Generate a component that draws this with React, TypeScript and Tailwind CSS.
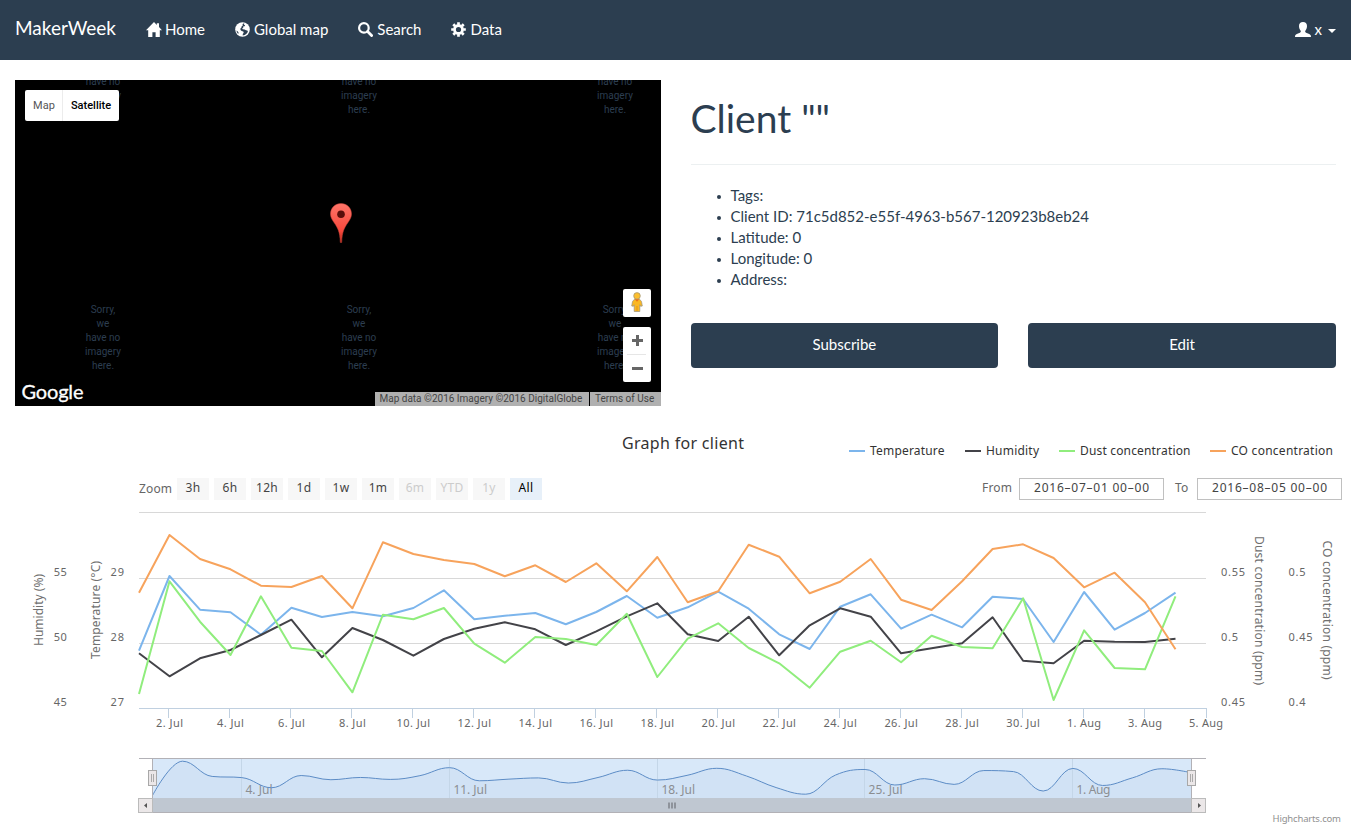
import React from "react";

const CHART_FONT = "font-['Noto_Sans','Open_Sans',sans-serif]";

const DAY = 30.486;
const LEFT = 139;

const temperature = [650.7, 576, 609.7, 612.3, 634.7, 607.7, 617, 612, 616.3, 608, 590.3, 619.3, 615.7, 613, 624.3, 612, 596, 617.7, 607.3, 591.7, 608.7, 634.3, 649, 606.7, 594.3, 628.7, 614.7, 627.3, 596.7, 599, 642, 592, 629.7, 613, 592.7];
const humidity = [653.3, 676.3, 658.3, 650, 635, 619.7, 657.3, 628, 640, 655.7, 639, 628.7, 622.3, 629.3, 645, 631.3, 616.3, 603.3, 634.3, 641, 616.7, 655.3, 625.3, 608.3, 616.7, 653.3, 648.3, 643.3, 617.3, 660.7, 663.3, 640.7, 641.7, 642, 638.7];
const dust = [694, 581.3, 621.7, 655, 596.3, 647.7, 651, 692.3, 614.7, 619.3, 608, 643.7, 662.7, 637, 639, 645, 613.7, 677, 638.7, 623.3, 648, 663.3, 687.7, 651.7, 640.7, 662.3, 635.7, 647, 648.3, 598.3, 700, 630.3, 668, 669.3, 596.3];
const co = [592.7, 535, 559, 569.3, 585.7, 587, 576, 608.3, 542.3, 554, 560, 564, 576.3, 565.3, 582, 563.3, 591.3, 557, 602.3, 591.3, 544.7, 556.7, 593.3, 581.7, 559, 599.7, 610, 581.3, 549, 544.3, 558, 587.3, 572.7, 602.3, 649.3];

const line = (ys: number[]) => ys.map((y, i) => `${(LEFT + i * DAY).toFixed(1)},${y}`).join(" ");

// Smoothed curve for the navigator; control points never overshoot their neighbours.
function spline(pts: number[][]): string {
  let d = `M${pts[0][0]} ${pts[0][1]}`;
  let prevRight = pts[0];
  for (let i = 1; i < pts.length; i++) {
    const [x, y] = pts[i];
    let left = [x, y];
    let right = [x, y];
    if (i < pts.length - 1) {
      const [lx, ly] = pts[i - 1];
      const [nx, ny] = pts[i + 1];
      const lcx = (1.5 * x + lx) / 2.5;
      let lcy = (1.5 * y + ly) / 2.5;
      const rcx = (1.5 * x + nx) / 2.5;
      let rcy = (1.5 * y + ny) / 2.5;
      const c = ((rcy - lcy) * (rcx - x)) / (rcx - lcx) + y - rcy;
      lcy += c;
      rcy += c;
      if (lcy > ly && lcy > y) {
        lcy = Math.max(ly, y);
        rcy = 2 * y - lcy;
      } else if (lcy < ly && lcy < y) {
        lcy = Math.min(ly, y);
        rcy = 2 * y - lcy;
      }
      if (rcy > ny && rcy > y) {
        rcy = Math.max(ny, y);
        lcy = 2 * y - rcy;
      } else if (rcy < ny && rcy < y) {
        rcy = Math.min(ny, y);
        lcy = 2 * y - rcy;
      }
      left = [lcx, lcy];
      right = [rcx, rcy];
    }
    d += ` C${prevRight[0].toFixed(2)} ${prevRight[1].toFixed(2)} ${left[0].toFixed(2)} ${left[1].toFixed(2)} ${x.toFixed(2)} ${y.toFixed(2)}`;
    prevRight = right;
  }
  return d;
}

const navPoints = temperature.map((t, i) => [152.8 + i * 29.68, 761.2 + (t - 576) * 0.452]);
navPoints.push([1191.5, 772.8]);
const navPath = spline(navPoints);

const HomeIcon = () => (
  <svg viewBox="0 0 16 15" className="h-[15px] w-4" fill="#fff">
    <path d="M8 0 0 8.2h2.2V15h4.2v-4.8h3.2V15h4.2V8.2H16L13 5.1V1.2h-2.2v1.7z" />
  </svg>
);
const GlobeIcon = () => (
  <svg viewBox="0 0 15 15" className="size-[15px]">
    <circle cx="7.5" cy="7.5" r="7.3" fill="#fff" />
    <path fill="#2c3e50" d="M8.300 1.400 9.300 1.500 9 2.700 10.100 3.300 9.700 4.300 8.400 4.300 8.300 5.600 7.200 6.500 7.800 7.300 9.600 7.400 11 8.200 12.400 8.600 12.900 9.800 11.700 11.600 9.800 13.100 7.700 13.600 7.800 12 8.700 10.700 8.300 9.600 6.600 9.100 5.500 7.900 5.400 6.600 6.300 5.700 6.700 4.200 8 3.200 7.400 2.400zM1.500 8.400 2.800 9.400 3.500 10.600 3.300 12 1.900 10.200z" />
  </svg>
);
const SearchIcon = () => (
  <svg viewBox="0 0 15 15" className="size-[15px]" fill="none" stroke="#fff">
    <circle cx="5.9" cy="5.9" r="4.8" strokeWidth="2.2" />
    <path d="m9.6 9.6 4 4" strokeWidth="2.8" strokeLinecap="round" />
  </svg>
);
const CogIcon = () => (
  <svg viewBox="0 0 15 15" className="size-[15px]" fill="none" stroke="#fff">
    <circle cx="7.5" cy="7.5" r="4" strokeWidth="2.8" />
    <g strokeWidth="2.7">
      <path d="M7.5.2v2.6M7.5 12.2v2.6M.2 7.5h2.6M12.2 7.5h2.6M2.3 2.3l1.9 1.9M10.8 10.8l1.9 1.9M12.7 2.3l-1.9 1.9M4.2 10.8l-1.9 1.9" />
    </g>
  </svg>
);
const UserIcon = () => (
  <svg viewBox="0 0 16 15" className="h-[15px] w-4" fill="#fff">
    <path d="M8 0c2.5 0 4 1.5 4 4 0 1.8-.6 3.3-1.5 4.4-.6.8-.4 1.8.6 2.3l3.1 1.4c1.1.5 1.8 1.3 1.8 2.900H0c0-1.6.7-2.4 1.8-2.9l3.1-1.4c1-.5 1.2-1.5.6-2.3C4.600 7.300 4 5.800 4 4c0-2.500 1.500-4 4-4z" />
  </svg>
);

const navItems = [
  { label: "Home", Icon: HomeIcon, gap: "gap-[3px]" },
  { label: "Global map", Icon: GlobeIcon, gap: "gap-[4px]" },
  { label: "Search", Icon: SearchIcon, gap: "gap-[4px]" },
  { label: "Data", Icon: CogIcon, gap: "gap-[4px]" },
];

function Navbar() {
  return (
    <header className="flex h-[60px] items-center justify-between bg-[#2c3e50] px-[15px] pb-[2px] text-[15px] text-white">
      <div className="flex items-center">
        <span className="mr-[30px] pb-[3px] text-[19px] leading-[21px]">MakerWeek</span>
        <nav className="flex gap-[30px]">
          {navItems.map(({ label, Icon, gap }) => (
            <a key={label} className={`flex items-center leading-[21px] ${gap}`}>
              <Icon />
              {label}
            </a>
          ))}
        </nav>
      </div>
      <a className="flex items-center gap-[3px] leading-[21px]">
        <UserIcon />
        <span className="pl-[1px]">x</span>
        <span className="ml-[3px] mt-[4px] border-x-4 border-t-4 border-x-transparent border-t-white" />
      </a>
    </header>
  );
}

const upperTiles = ["left-[60px] -top-[5px]", "left-[316px] -top-[5px]", "left-[572px] -top-[5px]"];
const lowerTiles = ["left-[60px] top-[223px]", "left-[316px] top-[223px]", "left-[572px] top-[223px]"];

function MapPanel() {
  return (
    <div className="relative h-[326px] overflow-hidden bg-black font-[Roboto,sans-serif]">
      {upperTiles.map((pos) => (
        <div key={pos} className={`absolute w-14 text-center text-[10px] leading-[14px] text-[#2c3e50] ${pos}`}>
          have no<br />imagery<br />here.
        </div>
      ))}
      {lowerTiles.map((pos) => (
        <div key={pos} className={`absolute w-14 text-center text-[10px] leading-[14px] text-[#2c3e50] ${pos}`}>
          Sorry,<br />we<br />have no<br />imagery<br />here.
        </div>
      ))}
      <div className="absolute left-[10px] top-[10px] flex h-[31px] items-center rounded-[2px] bg-white text-[11px]">
        <span className="flex h-full w-[38px] items-center justify-center border-r border-[#ececec] pl-[1px] pt-[1px] text-[#565656]">Map</span>
        <span className="flex h-full w-14 items-center justify-center pt-[1px] font-medium text-black">Satellite</span>
      </div>
      <svg viewBox="0 0 22 40" className="absolute left-[315px] top-[123px] h-10 w-[22px]">
        <defs>
          <linearGradient id="pin" x1="0" y1="0" x2="0" y2="1">
            <stop offset="0" stopColor="#fe7569" />
            <stop offset="0.7" stopColor="#f8483c" />
            <stop offset="1" stopColor="#b52a1c" />
          </linearGradient>
        </defs>
        <path d="M11 .5C5 .5.500 5 .500 11c0 3 1.400 5.500 3.500 8.500 3.500 5 6 9 6.300 20h1.400c.3-11 2.800-15 6.300-20 2.100-3 3.500-5.500 3.500-8.500C21.500 5 17 .5 11 .5z" fill="url(#pin)" stroke="#c8453b" strokeWidth=".5" />
        <circle cx="11" cy="11.300" r="3.800" fill="#590e0b" />
      </svg>
      <div className="absolute right-[10px] top-[209px] flex h-7 w-7 items-center justify-center rounded-[2px] bg-white pb-[2px]">
        <svg viewBox="0 0 12 20" className="h-5 w-3" stroke="#98927f" strokeWidth=".7">
          <path d="M3.500 7.200h5l2 2.300.8 4.500-1.700.3-.8-1.500v6.700H3.200v-6.700l-.8 1.500-1.700-.3.800-4.500z" fill="#fbb823" />
          <circle cx="6" cy="3.900" r="3.300" fill="#fdbf2d" />
          <path d="M3.800 7.200h4.400L6 9.800z" fill="#e8711c" stroke="none" />
          <path d="M6 14v5" stroke="#d98a12" />
        </svg>
      </div>
      <div className="absolute right-[10px] top-[247px] flex h-[55px] w-7 flex-col items-center rounded-[2px] bg-white">
        <svg viewBox="0 0 28 27" className="h-[27px] w-7 shrink-0" stroke="#666" strokeWidth="3">
          <path d="M9 13.500h11M14.500 8v11" />
        </svg>
        <span className="h-px w-[19px] bg-[#e6e6e6]" />
        <svg viewBox="0 0 28 27" className="h-[27px] w-7 shrink-0" stroke="#666" strokeWidth="3">
          <path d="M9 13.500h11" />
        </svg>
      </div>
      <svg className="absolute bottom-0 left-[6px] h-7 w-[66px] font-[Lato,sans-serif]">
        <text x="0.500" y="21" fontSize="20" fill="#fff" stroke="#fff" strokeWidth="0.3" textLength="62">Google</text>
      </svg>
      <div className="absolute bottom-0 right-0 flex h-[14px] gap-px text-[10px] leading-[13px] text-[#444]">
        <span className="w-[214px] bg-[#b0b0b0] pl-[5px] whitespace-nowrap">Map data ©2016 Imagery ©2016 DigitalGlobe</span>
        <span className="w-[71px] bg-[#b0b0b0] pl-[5.5px] whitespace-nowrap">Terms of Use</span>
      </div>
    </div>
  );
}

function ClientPanel() {
  return (
    <div>
      <h1 className="pt-[17px] text-[39px] leading-[43px]">Client ""</h1>
      <hr className="mt-6 border-[#ecf0f1]" />
      <ul className="mt-5 pl-[26px] text-[15px] leading-[21px]">
        {["Tags:", "Client ID: 71c5d852-e55f-4963-b567-120923b8eb24", "Latitude: 0", "Longitude: 0", "Address:"].map((t) => (
          <li key={t} className="flex items-center">
            <span className="mr-[10px] mt-[3px] size-1 rounded-full bg-[#2c3e50]" />
            {t}
          </li>
        ))}
      </ul>
      <div className="mt-[33px] grid grid-cols-2 gap-[30px]">
        <button className="h-[45px] rounded-[4px] bg-[#2c3e50] pb-[3px] text-[15px] text-white">Subscribe</button>
        <button className="h-[45px] rounded-[4px] bg-[#2c3e50] pb-[3px] text-[15px] text-white">Edit</button>
      </div>
    </div>
  );
}

const legend = [
  { label: "Temperature", color: "bg-[#7cb5ec]", width: 74.5 },
  { label: "Humidity", color: "bg-[#434348]", width: 53 },
  { label: "Dust concentration", color: "bg-[#90ed7d]", width: 110.5 },
  { label: "CO concentration", color: "bg-[#f7a35c]", width: 102 },
];
const ranges = ["3h", "6h", "12h", "1d", "1w", "1m", "6m", "YTD", "1y", "All"];

function rangeClass(label: string) {
  if (label === "All") return "bg-[#e7f0f9] text-black";
  if (["6m", "YTD", "1y"].includes(label)) return "bg-[#f7f7f7] text-[#ccc]";
  return "bg-[#f7f7f7] text-[#444]";
}

// One line of text set to an exact measure.
function Fit({ text, width, size, fill }: { text: string; width: number; size: number; fill: string }) {
  return (
    <svg width={width} height={20} className="block overflow-visible">
      <text x="0" y={size > 14 ? 16 : 14} fontSize={size} fill={fill} textLength={width}>{text}</text>
    </svg>
  );
}

function DateField({ value }: { value: string }) {
  return (
    <span className="flex h-[22px] w-[145px] items-center justify-center border border-[#c0c0c0] pr-[1px] pb-[2px]">
      <Fit text={value} width={115} size={12} fill="#444" />
    </span>
  );
}

function ChartHeader() {
  return (
    <div className={`h-[79px] ${CHART_FONT}`}>
      <div className="grid h-[52px] grid-cols-[1fr_auto_1fr] pl-[15px]">
        <span />
        <h2 className="pt-[7px]">
          <Fit text="Graph for client" width={122} size={16} fill="#333" />
        </h2>
        <ul className="flex justify-end gap-5 pr-[18px] pt-[15px]">
          {legend.map((l) => (
            <li key={l.label} className="flex h-5 items-center gap-[5px]">
              <span className={`h-[2px] w-4 ${l.color}`} />
              <Fit text={l.label} width={l.width} size={12} fill="#333" />
            </li>
          ))}
        </ul>
      </div>
      <div className="flex h-[22px] items-center justify-between pl-[139px] pr-[9px] text-[12px] text-[#666]">
        <div className="flex items-center gap-[5px]">
          <Fit text="Zoom" width={33} size={12} fill="#666" />
          {ranges.map((r) => (
            <span key={r} className={`flex h-[22px] w-8 items-center justify-center pb-[2px] tracking-[0.3px] ${rangeClass(r)}`}>{r}</span>
          ))}
        </div>
        <div className="flex items-center">
          <span className="w-[37px] pb-[2px] tracking-[0.2px]">From</span>
          <DateField value="2016–07–01 00–00" />
          <span className="w-[33px] pb-[2px] pl-[11px] tracking-[0.2px]">To</span>
          <DateField value="2016–08–05 00–00" />
        </div>
      </div>
    </div>
  );
}

const dateTicks = ["2. Jul", "4. Jul", "6. Jul", "8. Jul", "10. Jul", "12. Jul", "14. Jul", "16. Jul", "18. Jul", "20. Jul", "22. Jul", "24. Jul", "26. Jul", "28. Jul", "30. Jul", "1. Aug", "3. Aug", "5. Aug"];
const tickWidth = (t: string) => (t.length === 7 ? 33.5 : t.endsWith("Aug") ? 34 : 27);
const navTicks = [
  { x: 241.5, label: "4. Jul", w: 27 },
  { x: 449.5, label: "11. Jul", w: 33.5 },
  { x: 657.5, label: "18. Jul", w: 33.5 },
  { x: 864.5, label: "25. Jul", w: 34 },
  { x: 1072.5, label: "1. Aug", w: 34 },
];
const axisLabels = [
  { x: 53.8, values: ["55", "50", "45"], w: [13, 13, 13] },
  { x: 110.5, values: ["29", "28", "27"], w: [13.5, 13.5, 13.5] },
  { x: 1221, values: ["0.55", "0.5", "0.45"], w: [24, 17, 24] },
  { x: 1288.5, values: ["0.5", "0.45", "0.4"], w: [17, 24, 17] },
];

function Chart() {
  return (
    <svg viewBox="0 505 1351 322" className={`block h-[322px] w-full text-[11px] ${CHART_FONT}`} fill="#666">
      <path d="M139 512.500h1067M139 578.500h1067M139 643.500h1067" stroke="#d8d8d8" />
      <path d="M139 708.500h1067" stroke="#c0d0e0" />
      {dateTicks.map((t, i) => {
        const x = i === dateTicks.length - 1 ? 1206.5 : 168.5 + i * 61;
        return (
          <g key={t}>
            <path d={`M${x} 708v10`} stroke="#c0d0e0" />
            <text x={LEFT + (1 + 2 * i) * DAY - tickWidth(t) / 2} y="727" textLength={tickWidth(t)}>{t}</text>
          </g>
        );
      })}
      {axisLabels.map((a) =>
        a.values.map((v, i) => (
          <text key={`${a.x}-${v}`} x={a.x} y={576 + i * 65} textLength={a.w[i]}>{v}</text>
        ))
      )}
      <g fontSize="12" fill="#707070">
        <text transform="translate(43 646) rotate(-90)" textLength="72">Humidity (%)</text>
        <text transform="translate(100 659) rotate(-90)" textLength="98">Temperature (°C)</text>
        <text transform="translate(1255 536) rotate(90)" textLength="149">Dust concentration (ppm)</text>
        <text transform="translate(1323 540.500) rotate(90)" textLength="139">CO concentration (ppm)</text>
      </g>
      <g fill="none" strokeWidth="2" strokeLinejoin="round">
        <polyline points={line(temperature)} stroke="#7cb5ec" />
        <polyline points={line(humidity)} stroke="#434348" />
        <polyline points={line(dust)} stroke="#90ed7d" />
        <polyline points={line(co)} stroke="#f7a35c" />
      </g>

      <rect x="153" y="759" width="1038.500" height="39" fill="#d8e8f9" />
      <path d={`${navPath} V798 H152.800 Z`} fill="#d1e2f5" />
      {navTicks.map((t) => (
        <g key={t.label}>
          <path d={`M${t.x} 759v39`} stroke="#c4d6e8" />
          <text x={t.x + 4} y="794" fontSize="12" fill="#8b8e92" textLength={t.w}>{t.label}</text>
        </g>
      ))}
      <path d={navPath} fill="none" stroke="#5c8cc6" />
      <rect x="152.500" y="798" width="1039" height="14.500" fill="#bfc7d1" />
      <path d="M139 758.500h1067M152.500 758v54.500M1191.500 758v54.500M139 812.500h1067" stroke="#b2b1b6" fill="none" />
      <g fill="#ebe7e8" stroke="#bbb">
        <rect x="138.500" y="798.500" width="14" height="14" />
        <rect x="1191.500" y="798.500" width="14" height="14" />
        <rect x="148.500" y="770.500" width="8" height="15" stroke="#a8a8a8" />
        <rect x="1187.500" y="770.500" width="8" height="15" stroke="#a8a8a8" />
      </g>
      <path d="M151.500 774v8M153.500 774v8M1190.500 774v8M1192.500 774v8" stroke="#aaa" />
      <path d="M147 803v5l-3-2.500zM1198 803v5l3-2.500z" fill="#555" />
      <path d="M669 802.500v6M672 802.500v6M675 802.500v6" stroke="#8e939b" strokeWidth="2" />
      <text x="1272.500" y="822" fontSize="9.500" fill="#909090" textLength="68.500">Highcharts.com</text>
    </svg>
  );
}

export default function App() {
  return (
    <div className="h-[827px] overflow-hidden bg-white font-[Lato,sans-serif] text-[#2c3e50]">
      <Navbar />
      <main>
        <section className="grid grid-cols-2 gap-[30px] px-[15px] pt-5 pb-5">
          <MapPanel />
          <ClientPanel />
        </section>
        <section>
          <ChartHeader />
          <Chart />
        </section>
      </main>
    </div>
  );
}
